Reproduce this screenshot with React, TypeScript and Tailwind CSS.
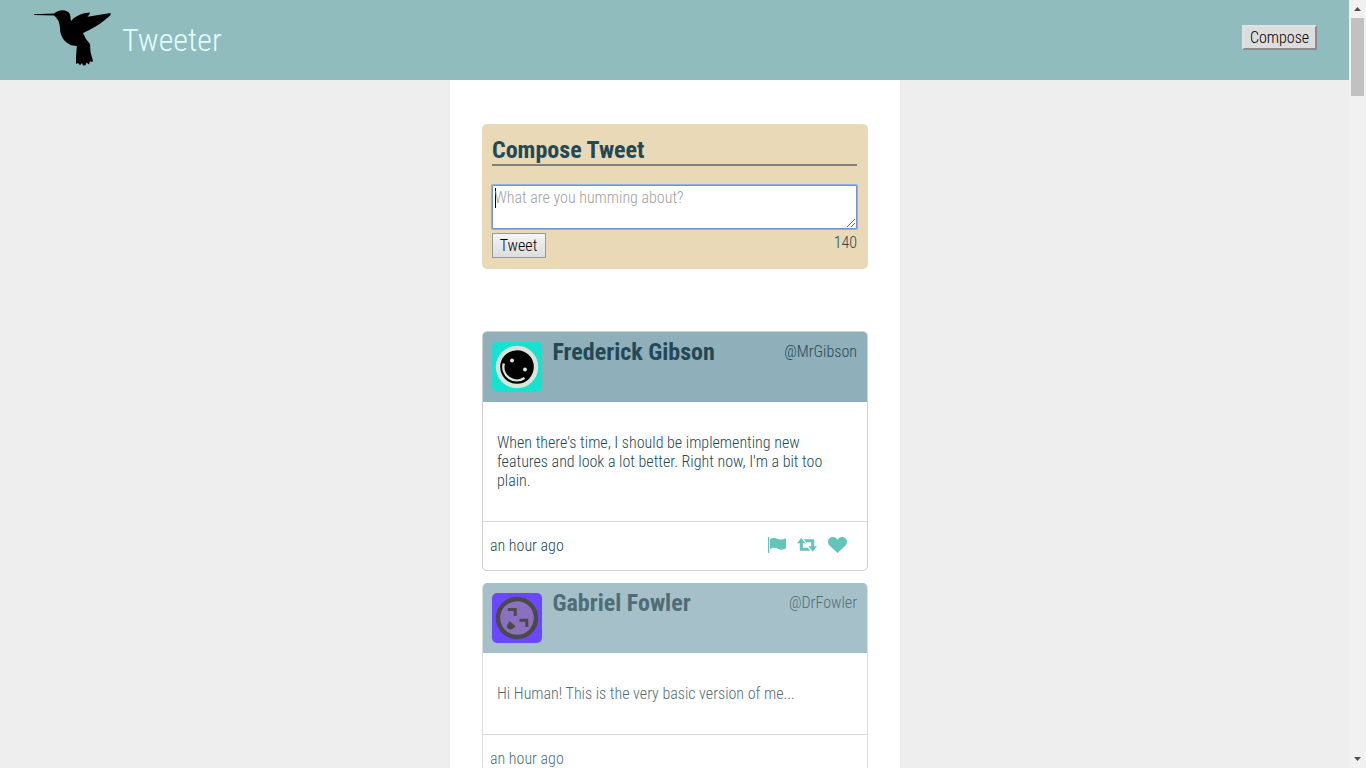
import React from "react";

const actionIcons = [
  { w: 18, vb: "0 0 18 16", d: "M0 0H1.3V16H0ZM2 2C5 .5 7 .7 10 2C13 3.2 15 2.3 18 1.2V11.5C15 13 12.5 13 10 11.7C7 10.5 5 10.5 2 12.3Z" },
  { w: 20, vb: "0 0 20 14", d: "M4.2 0L8.5 5.2H5.8V9.7H11L13.3 12.7H2.8V5.2H0ZM6.8 1.2H17.2V8.3H20L15.8 13.7L11.4 8.3H14.2V4.2H9.2Z" },
  { w: 19, vb: "0 0 19 16", d: "M9.5 16L1.5 8.4C-1.4 5.5 .3 0 4.8 0C7.2 0 8.5 1.4 9.5 2.7C10.5 1.4 11.8 0 14.2 0C18.7 0 20.4 5.5 17.5 8.4Z" },
];

function Actions() {
  return (
    <div className="mr-3 mb-0.5 flex items-center gap-[11px] text-[#63c5b9]">
      {actionIcons.map((i) => (
        <svg key={i.d} width={i.w} height="16" viewBox={i.vb} fill="currentColor"><path d={i.d} /></svg>
      ))}
    </div>
  );
}

function Hummingbird() {
  return (
    <svg width="80" height="60" viewBox="0 0 80 60" className="ml-8 mt-[8px] shrink-0">
      <path d="M2 6.2L22 5.6C24 3.5 27 2.2 31 2.2C36 2.5 39 5.5 38.5 10L39 13C42 9 47 6.5 52 5.2L58 4.6L57.5 6.2L55.5 8.8L77 5.3C80 5.2 79 7 77 8.5C71 14 65 18 59 21C56 23 53 23.8 51 25L54 31L58 36L58.5 44L61 53L60 54L58 53.2L57 56.5L54.5 54.5L53.5 57.2L51 57.4L50 55L48 57.2L46 55L44 56L44 49L44.8 38L39 37.2C32 34 28 28 28 20C27.5 14 26 11 22 7.5L2 7Z" />
    </svg>
  );
}

function SmileAvatar() {
  return (
    <svg width="50" height="50" viewBox="0 0 50 50" className="shrink-0 rounded-[5px]">
      <path fill="#15e3cf" d="M0 0H50V50H0Z" />
      <circle cx="25" cy="25" r="19" fill="#020203" stroke="#d9e4db" strokeWidth="4.4" />
      <circle cx="20" cy="18.4" r="2" fill="#d9e4db" />
      <circle cx="33" cy="27.6" r="2" fill="#d9e4db" />
      <path d="M11.8 21.5A13.5 13.5 0 0 0 32.5 36" fill="none" stroke="#d9e4db" strokeWidth="2.4" />
    </svg>
  );
}

function DropAvatar() {
  return (
    <svg width="50" height="50" viewBox="0 0 50 50" className="shrink-0 rounded-[5px]">
      <path fill="#6b48ff" d="M0 0H50V50H0Z" />
      <circle cx="25" cy="25" r="19" fill="#8b70bd" stroke="#4a4a4a" strokeWidth="4.4" />
      <path d="M15.8 16.5H23.2V23M27.4 27.2H34.8V34" fill="none" stroke="#4a4a4a" strokeWidth="3" />
      <path d="M17.5 28L23.8 33.5C21.5 34.5 21.5 36.3 18.5 36.5C14.8 36.5 13.8 32.5 16 31Z" fill="#4a4a4a" />
    </svg>
  );
}

type TweetProps = {
  name: string; handle: string; text: string; avatar: React.ReactNode; active?: boolean;
};

function Tweet({ name, handle, text, avatar, active }: TweetProps) {
  return (
    <article className={active
      ? "mb-3 overflow-hidden rounded-[5px] border border-[#cfcfcf] text-[#244855]"
      : "mb-3 overflow-hidden rounded-[5px] border border-t-0 border-[#dcdcdc] text-[#506d76]"}>
      <header className={active
        ? "-mx-px flex h-[70px] bg-[#8fb0ba] p-2.5"
        : "-mx-px flex h-[70px] bg-[#a5c0c9] p-2.5"}>
        {avatar}
        <h2 className="ml-[11px] -mt-1 text-2xl leading-7 font-bold">{name}</h2>
        <span className="ml-auto mr-[0.5px] leading-[19px]">{handle}</span>
      </header>
      <p className="py-[31px] pr-10 pl-[14.5px] leading-[19px]">{text}</p>
      <footer className="box-content flex h-12 items-center justify-between border-t border-[#d9d9d9] pr-2 pl-[7.5px]">
        <span>an hour ago</span>
        {active && <Actions />}
      </footer>
    </article>
  );
}

export default function App() {
  return (
    <div className="flex h-screen overflow-hidden bg-[#eeeeee] font-['Roboto_Condensed','Roboto',sans-serif] text-base font-light text-[#244855] [font-stretch:75%]">
      <div className="flex min-w-0 flex-1 flex-col">
        <nav className="flex h-20 shrink-0 bg-[#90bcbd]">
          <Hummingbird />
          <h1 className="ml-[10px] mt-[21px] text-[32px] leading-[38px] text-[#e4ffff]">Tweeter</h1>
          <button className="mt-[25px] mr-8 ml-auto h-[25px] w-[75px] border-2 border-t-[#e2e2e2] border-r-[#8b8b8b] border-b-[#8b8b8b] border-l-[#e2e2e2] bg-[#dddddd] leading-[19px] text-black">Compose</button>
        </nav>
        <main className="mx-auto h-[688px] w-[450px] overflow-hidden bg-white px-8 pt-11">
          <section className="mb-[62px] h-[145px] rounded-[5px] bg-[#ead9b7] px-2.5 pt-3">
            <h2 className="mr-px mb-[19px] h-[30px] border-b-2 border-[#808080] pl-[0.5px] text-2xl leading-7 font-bold">Compose Tweet</h2>
            <div className="relative mr-px h-11 rounded-[1px] border border-[#6f98d3] bg-white pl-[2px] text-[#a0a0a0] ring-1 ring-[#8fb0e0]">
              <span className="flex h-[23px] items-center leading-[19px]"><i className="-mr-px h-5 w-px bg-black" />What are you humming about?</span>
              <svg className="absolute right-0 bottom-0" width="10" height="10" viewBox="0 0 10 10" stroke="#555" strokeWidth=".9"><path d="M1 9L9 1M5 9L9 5" /></svg>
            </div>
            <div className="mt-1 flex justify-between">
              <button className="h-[25px] w-[54px] border border-[#999] bg-linear-to-b from-[#f5f5f5] to-[#dddddd] leading-[19px] text-black">Tweet</button>
              <span className="mr-[0.5px] leading-[19px]">140</span>
            </div>
          </section>
          <Tweet active name="Frederick Gibson" handle="@MrGibson" avatar={<SmileAvatar />} text="When there's time, I should be implementing new features and look a lot better. Right now, I'm a bit too plain." />
          <Tweet name="Gabriel Fowler" handle="@DrFowler" avatar={<DropAvatar />} text="Hi Human! This is the very basic version of me..." />
        </main>
      </div>
      <div className="flex w-[17px] shrink-0 flex-col items-center bg-[#f1f1f1]">
        <svg width="17" height="18" viewBox="0 0 17 18" fill="#505050"><path d="M5 11L8.5 7L12 11Z" /></svg>
        <div className="h-[78px] w-[13px] bg-[#c1c1c1]" />
        <svg className="mt-auto" width="17" height="17" viewBox="0 0 17 17" fill="#505050"><path d="M5 6L8.5 10L12 6Z" /></svg>
      </div>
    </div>
  );
}
